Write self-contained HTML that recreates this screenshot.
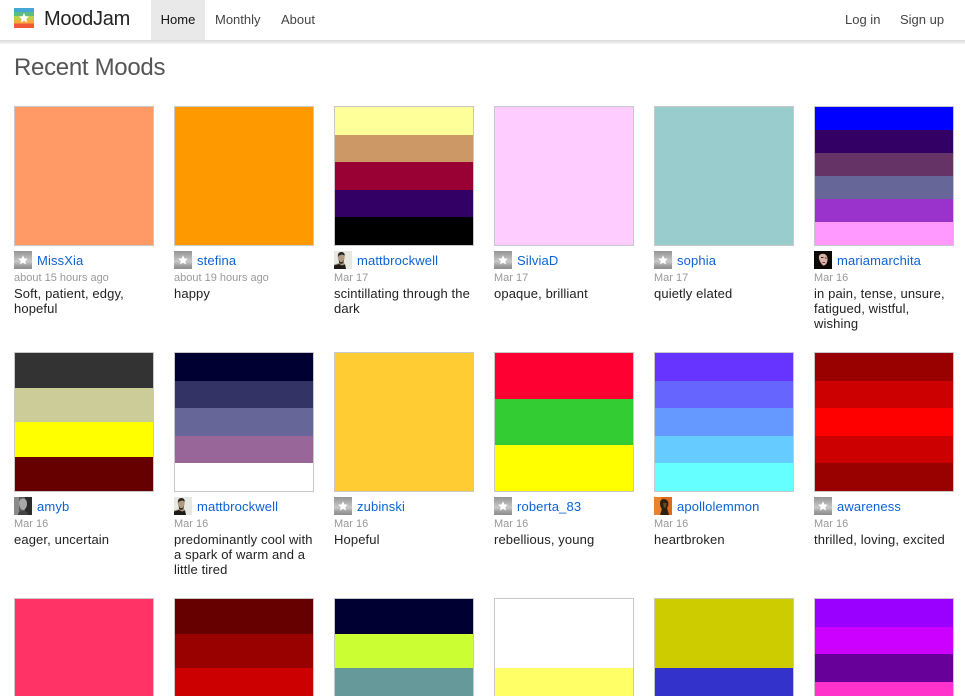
<!DOCTYPE html>
<html lang="en">
<head>
<meta charset="utf-8">
<title>MoodJam</title>
<style>
html,body{margin:0;padding:0;background:#fff;width:965px;height:696px;overflow:hidden;font-family:"Liberation Sans",Arial,sans-serif;font-size:13px;line-height:15px;color:#222}
a{text-decoration:none;color:inherit}
#page{position:relative;width:965px;height:696px;overflow:hidden;background:#fff}
#bar{position:absolute;left:0;top:0;width:965px;height:40px;background:#fff}
#shade{position:absolute;left:0;top:40px;width:965px;height:4px;background:linear-gradient(#d8d8d8,#e2e2e2 30%,#f6f6f6)}
#logo{position:absolute;left:14px;top:8px;width:20px;height:20px}
#brand{position:absolute;left:44px;top:8px;font-size:20px;line-height:23px;color:#222;letter-spacing:-.25px}
.nav{position:absolute;top:0;height:40px;line-height:39px;color:#444;text-align:center}
#home{left:151px;width:54px;background:#e9e9e9;color:#111}
h1{position:absolute;left:14px;top:53px;margin:0;font-weight:normal;font-size:24px;line-height:29px;color:#555;letter-spacing:-.3px}
.c{position:absolute;width:140px}
.s{box-sizing:border-box;width:140px;height:140px;border:1px solid #c8c8c8;display:flex;flex-direction:column;background:#fff}
.s i{flex:1 1 0;display:block}
.r3{height:98px;border-bottom:0}
.r3 i{flex:none}
.a{position:absolute;left:0;top:145px;width:18px;height:18px;display:block}
.u{position:absolute;left:23px;top:147px;color:#0b63d6;white-space:nowrap;letter-spacing:.13px}
.d{position:absolute;left:0;top:166px;font-size:11px;line-height:13px;color:#999;white-space:nowrap}
.t{position:absolute;left:0;top:180px;width:142px;color:#222;letter-spacing:.12px}
</style>
</head>
<body>
<svg width="0" height="0" style="position:absolute">
<defs>
<linearGradient id="g" x1="0" y1="0" x2="0" y2="1">
<stop offset="0" stop-color="#949494"/><stop offset=".3" stop-color="#b0b0b0"/><stop offset=".6" stop-color="#c8c8c8"/><stop offset=".8" stop-color="#a0a0a0"/><stop offset="1" stop-color="#8e8e8e"/>
</linearGradient>
<symbol id="st" viewBox="0 0 18 18">
<rect width="18" height="18" fill="url(#g)"/>
<path d="M9 4.200 10.400 7.400 13.900 7.700 11.300 10 12 13.500 9 11.700 6 13.500 6.700 10 4.100 7.700 7.600 7.400Z" fill="#fff"/>
</symbol>
<symbol id="matt" viewBox="0 0 18 18">
<rect width="18" height="18" fill="#e8e8e2"/>
<path d="M0 18V13.500L5 12V10C3.500 8 3.300 3 5 1.800 7 .5 10 1 10.500 3.500 11 6 10.500 9 9 11L11 13 12 18Z" fill="#b09a80"/>
<path d="M4 6C3.500 3 5 1 7.500 1 9.500 1 10.800 2.500 10.800 4.500L8 3.500 5 4.500Z" fill="#2c2620"/>
<path d="M4.800 8.500 6 11 8.500 11 9.800 8.500 9.500 12 7 13 5 12Z" fill="#3a3028"/>
<path d="M0 18V14.500L5 13 8 14.500 11 13.500 12 18Z" fill="#1e1a16"/>
</symbol>
<symbol id="maria" viewBox="0 0 18 18">
<rect width="18" height="18" fill="#0c0806"/>
<path d="M5 5C6 2.500 10 2 12 4 14 6 14 10 12.500 12.500 11 15 9 15 8 13.500 6 11 4.500 8 5 5Z" fill="#d8b2a6"/>
<path d="M7 6.500H9.500M11 7H12.500" stroke="#33201c" stroke-width="1"/>
<path d="M8.500 11.500 11 11.500" stroke="#8a3030" stroke-width="1"/>
</symbol>
<symbol id="amy" viewBox="0 0 18 18">
<rect width="18" height="18" fill="#5a5a5a"/>
<path d="M11 0H18V18H11Z" fill="#2c2c2c"/>
<path d="M0 0H5V18H0Z" fill="#8a8a8a"/>
<path d="M5 6C5 3 7 1.500 9 1.500 12 1.500 13 4 13 7 13 10 11 13 9 13 7 13 5 10 5 6Z" fill="#a8a8a8"/>
<path d="M4 18C4 15 6 14 9 14 12 14 14 15 14 18Z" fill="#444"/>
</symbol>
<symbol id="apollo" viewBox="0 0 18 18">
<rect width="18" height="18" fill="#dc6a1e"/>
<rect width="7" height="18" fill="#e8852c"/>
<path d="M6 6C6 2.500 9 1.500 12 2.500 15 4 15 8 13 11L15 18H6L8 12C6.500 10.500 6 8.500 6 6Z" fill="#2e2010"/>
<path d="M9 6 12.500 6 12 10 10 11Z" fill="#6a4a20"/>
</symbol>
<symbol id="logo-s" viewBox="0 0 20 20">
<rect width="20" height="4" fill="#46a6d8"/>
<rect y="4" width="20" height="4" fill="#5dbd80"/>
<rect y="8" width="20" height="4" fill="#bcd04c"/>
<rect y="12" width="20" height="3.500" fill="#f6ad3a"/>
<rect y="15.500" width="20" height="4.500" fill="#f0583a"/>
<path d="M10 5 11.500 8.200 15 8.600 12.400 10.900 13.100 14.500 10 12.700 6.900 14.500 7.600 10.900 5 8.600 8.500 8.200Z" fill="#fff"/>
</symbol>
</defs>
</svg>
<div id="page">
<div id="bar"></div>
<div id="shade"></div>
<svg id="logo"><use href="#logo-s"/></svg>
<a id="brand" href="#">MoodJam</a>
<a class="nav" id="home" href="#">Home</a>
<a class="nav" href="#" style="left:215px">Monthly</a>
<a class="nav" href="#" style="left:281px">About</a>
<a class="nav" href="#" style="left:845px">Log in</a>
<a class="nav" href="#" style="left:900px">Sign up</a>

<h1>Recent Moods</h1>

<div class="c" style="left:14px;top:106px"><div class="s"><i style="background:#ff9966"></i></div><svg class="a"><use href="#st"/></svg><a class="u" href="#">MissXia</a><div class="d">about 15 hours ago</div><div class="t">Soft, patient, edgy, hopeful</div></div>
<div class="c" style="left:174px;top:106px"><div class="s"><i style="background:#ff9900"></i></div><svg class="a"><use href="#st"/></svg><a class="u" href="#">stefina</a><div class="d">about 19 hours ago</div><div class="t">happy</div></div>
<div class="c" style="left:334px;top:106px"><div class="s"><i style="background:#ffff99"></i><i style="background:#cc9966"></i><i style="background:#990033"></i><i style="background:#330066"></i><i style="background:#000"></i></div><svg class="a"><use href="#matt"/></svg><a class="u" href="#">mattbrockwell</a><div class="d">Mar 17</div><div class="t">scintillating through the dark</div></div>
<div class="c" style="left:494px;top:106px"><div class="s"><i style="background:#ffccff"></i></div><svg class="a"><use href="#st"/></svg><a class="u" href="#">SilviaD</a><div class="d">Mar 17</div><div class="t">opaque, brilliant</div></div>
<div class="c" style="left:654px;top:106px"><div class="s"><i style="background:#99cccc"></i></div><svg class="a"><use href="#st"/></svg><a class="u" href="#">sophia</a><div class="d">Mar 17</div><div class="t">quietly elated</div></div>
<div class="c" style="left:814px;top:106px"><div class="s"><i style="background:#0000ff"></i><i style="background:#330066"></i><i style="background:#663366"></i><i style="background:#666699"></i><i style="background:#9933cc"></i><i style="background:#ff99ff"></i></div><svg class="a"><use href="#maria"/></svg><a class="u" href="#">mariamarchita</a><div class="d">Mar 16</div><div class="t">in pain, tense, unsure, fatigued, wistful, wishing</div></div>

<div class="c" style="left:14px;top:352px"><div class="s"><i style="background:#333"></i><i style="background:#cccc99"></i><i style="background:#ffff00"></i><i style="background:#660000"></i></div><svg class="a"><use href="#amy"/></svg><a class="u" href="#">amyb</a><div class="d">Mar 16</div><div class="t">eager, uncertain</div></div>
<div class="c" style="left:174px;top:352px"><div class="s"><i style="background:#000033"></i><i style="background:#333366"></i><i style="background:#666699"></i><i style="background:#996699"></i><i style="background:#fff"></i></div><svg class="a"><use href="#matt"/></svg><a class="u" href="#">mattbrockwell</a><div class="d">Mar 16</div><div class="t">predominantly cool with a spark of warm and a little tired</div></div>
<div class="c" style="left:334px;top:352px"><div class="s"><i style="background:#ffcc33"></i></div><svg class="a"><use href="#st"/></svg><a class="u" href="#">zubinski</a><div class="d">Mar 16</div><div class="t">Hopeful</div></div>
<div class="c" style="left:494px;top:352px"><div class="s"><i style="background:#ff0033"></i><i style="background:#33cc33"></i><i style="background:#ffff00"></i></div><svg class="a"><use href="#st"/></svg><a class="u" href="#">roberta_83</a><div class="d">Mar 16</div><div class="t">rebellious, young</div></div>
<div class="c" style="left:654px;top:352px"><div class="s"><i style="background:#6633ff"></i><i style="background:#6666ff"></i><i style="background:#6699ff"></i><i style="background:#66ccff"></i><i style="background:#66ffff"></i></div><svg class="a"><use href="#apollo"/></svg><a class="u" href="#">apollolemmon</a><div class="d">Mar 16</div><div class="t">heartbroken</div></div>
<div class="c" style="left:814px;top:352px"><div class="s"><i style="background:#990000"></i><i style="background:#cc0000"></i><i style="background:#ff0000"></i><i style="background:#cc0000"></i><i style="background:#990000"></i></div><svg class="a"><use href="#st"/></svg><a class="u" href="#">awareness</a><div class="d">Mar 16</div><div class="t">thrilled, loving, excited</div></div>

<div class="c" style="left:14px;top:598px"><div class="s r3"><i style="background:#ff3366;height:97px"></i></div></div>
<div class="c" style="left:174px;top:598px"><div class="s r3"><i style="background:#660000;height:35px"></i><i style="background:#990000;height:34px"></i><i style="background:#cc0000;height:28px"></i></div></div>
<div class="c" style="left:334px;top:598px"><div class="s r3"><i style="background:#000033;height:35px"></i><i style="background:#ccff33;height:34px"></i><i style="background:#669999;height:28px"></i></div></div>
<div class="c" style="left:494px;top:598px"><div class="s r3"><i style="background:#fff;height:69px"></i><i style="background:#ffff66;height:28px"></i></div></div>
<div class="c" style="left:654px;top:598px"><div class="s r3"><i style="background:#cccc00;height:69px"></i><i style="background:#3333cc;height:28px"></i></div></div>
<div class="c" style="left:814px;top:598px"><div class="s r3"><i style="background:#9900ff;height:28px"></i><i style="background:#cc00ff;height:27px"></i><i style="background:#660099;height:28px"></i><i style="background:#ff33cc;height:14px"></i></div></div>
</div>
</body>
</html>
